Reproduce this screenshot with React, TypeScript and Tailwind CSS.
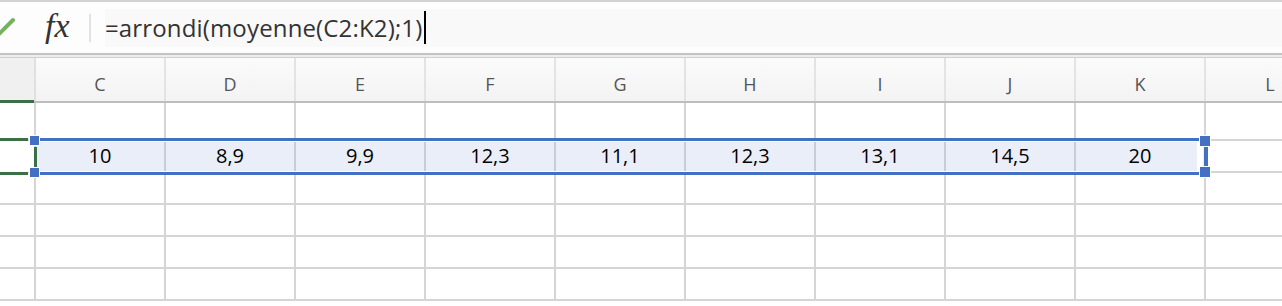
import React from "react";

const cols = ["C", "D", "E", "F", "G", "H", "I", "J", "K", "L"];
const values = ["10", "8,9", "9,9", "12,3", "11,1", "12,3", "13,1", "14,5", "20", ""];

export default function App() {
  return (
    <div
      className="relative w-[1282px] h-[306px] overflow-hidden bg-white"
      style={{ fontFamily: '"Open Sans", "Liberation Sans", sans-serif' }}
    >
      {/* Formula bar */}
      <div className="h-[53px] border-t-2 border-[#d2d2d2] bg-[#fdfdfd] flex items-center">
        <svg width="20" height="51" viewBox="0 0 20 51" className="shrink-0 self-start">
          <polyline points="-5,26 0,31 13,18" fill="none" stroke="#74b35a" strokeWidth="4" strokeLinecap="round" />
        </svg>
        <div
          className="ml-[25px] w-[32px] text-[34px] leading-none italic text-[#333] -mt-[4px]"
          style={{ fontFamily: '"Liberation Serif", serif' }}
        >
          fx
        </div>
        <div className="ml-[12px] w-[2px] h-[28px] bg-[#e2e2e2]" />
        <div className="ml-[14px] flex-1 h-[38px] bg-[#f9f9f9] flex items-center">
          <span className="text-[24px] text-[#333] tracking-[0.15px]">=arrondi(moyenne(C2:K2);1)</span>
          <span className="ml-[2px] w-[2px] h-[33px] bg-black" />
        </div>
      </div>
      {/* separator lines */}
      <div className="h-[2px] bg-[#c3c3c3]" />
      <div className="h-[2px] bg-[#ededed]" />
      <div className="h-[1px] bg-[#d0d0d0]" />
      {/* Header row */}
      <div className="flex h-[45px]">
        <div className="w-[34px] shrink-0 bg-[#f0f0f0] border-b-[3px] border-[#3b7046]" />
        <div className="w-[2px] shrink-0 bg-[#e0e0e0] border-b-2 border-[#bdbdbd]" />
        {cols.map((c) => (
          <div
            key={c}
            className="w-[130px] shrink-0 flex border-b-2 border-[#bdbdbd] bg-gradient-to-b from-[#fbfbfb] to-[#f3f3f3]"
          >
            <div className="w-[128px] flex items-center justify-center pt-[9px] text-[18px] text-[#555]">{c}</div>
            <div className="w-[2px] bg-[#e3e3e3]" />
          </div>
        ))}
      </div>
      {/* Body rows */}
      {[38, 32, 32, 32, 32, 32].map((h, r) => (
        <div key={r} className="flex" style={{ height: h }}>
          <div className="w-[34px] shrink-0 border-b-2 border-[#d5d5d5]" />
          <div className="w-[2px] shrink-0 bg-[#d5d5d5]" />
          {cols.map((c, i) => {
            const sel = r === 1 && i < 9;
            return (
              <div key={c} className="w-[130px] shrink-0 flex">
                <div
                  className={
                    "w-[128px] border-b-2 flex items-center justify-center text-[20px] text-black " +
                    (sel ? "bg-[#eaeef8] border-[#c9ccd4]" : "border-[#d5d5d5]")
                  }
                >
                  {r === 1 ? values[i] : ""}
                </div>
                <div className={"w-[2px] " + (sel ? "bg-[#c9ccd4]" : "bg-[#d5d5d5]")} />
              </div>
            );
          })}
        </div>
      ))}

      {/* Row header green markers */}
      <div className="absolute left-0 top-[138px] w-[28px] h-[3px] bg-[#3b7046]" />
      <div className="absolute left-0 top-[172px] w-[28px] h-[3px] bg-[#3b7046]" />
      <div className="absolute left-0 top-[141px] w-[34px] h-[31px] bg-white" />
      <div className="absolute left-[34px] top-[147px] w-[3px] h-[20px] bg-[#3b7046]" />

      {/* Selection borders */}
      <div className="absolute left-[40px] top-[138px] w-[1160px] h-[3px] bg-[#4470c4]" />
      <div className="absolute left-[40px] top-[141px] w-[1157px] h-[1px] bg-white" />
      <div className="absolute left-[40px] top-[172px] w-[1160px] h-[3px] bg-[#4470c4]" />
      <div className="absolute left-[40px] top-[171px] w-[1157px] h-[1px] bg-white" />
      <div className="absolute left-[1197px] top-[141px] w-[6px] h-[31px] bg-white" />
      <div className="absolute left-[1204px] top-[147px] w-[4px] h-[20px] bg-[#4470c4]" />

      {/* Handles */}
      <div className="absolute left-[29px] top-[135px] w-[11px] h-[11px] bg-white p-[1px]">
        <div className="w-full h-full bg-[#4470c4]" />
      </div>
      <div className="absolute left-[29px] top-[167px] w-[11px] h-[11px] bg-white p-[1px]">
        <div className="w-full h-full bg-[#4470c4]" />
      </div>
      <div className="absolute left-[1199px] top-[135px] w-[12px] h-[12px] bg-white p-[1px]">
        <div className="w-full h-full bg-[#4470c4]" />
      </div>
      <div className="absolute left-[1199px] top-[166px] w-[12px] h-[12px] bg-white p-[1px]">
        <div className="w-full h-full bg-[#4470c4]" />
      </div>
    </div>
  );
}
